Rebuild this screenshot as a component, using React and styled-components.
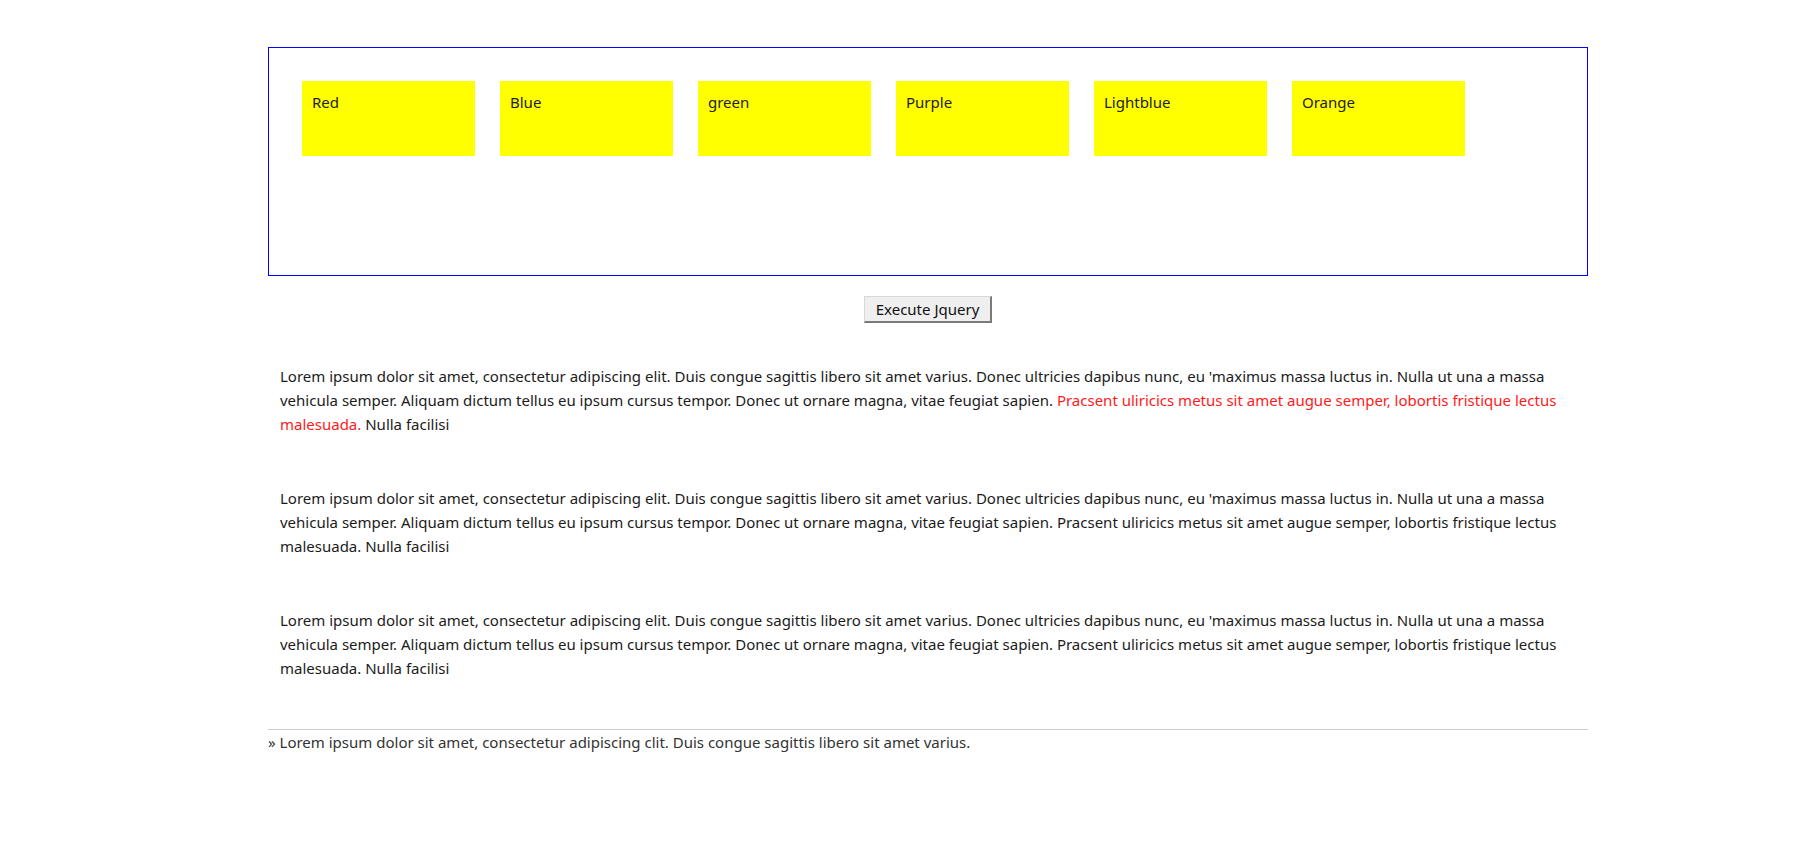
import styled, { createGlobalStyle } from "styled-components";

const GlobalStyle = createGlobalStyle`
  body {
    margin: 0;
    background: #fff;
    font-family: "Noto Sans", "Open Sans", sans-serif;
    color: #1b1b1b;
  }
`;

const Page = styled.div`
  width: 1320px;
  margin-left: 268px;
  padding-top: 47px;
`;

const Stage = styled.div`
  border: 1px solid #0000ff;
  padding: 33px 0 0 33px;
  box-sizing: border-box;
  height: 229px;
`;

const TileRow = styled.div`
  display: flex;
  gap: 25px;
`;

const Tile = styled.div`
  width: 173px;
  height: 75px;
  box-sizing: border-box;
  background: #ffff00;
  padding: 9px 10px;
  font-size: 15px;
  line-height: 24px;
  color: #222;
`;

const ButtonBar = styled.div`
  display: flex;
  justify-content: center;
  margin-top: 20px;
`;

const ExecButton = styled.button`
  width: 128px;
  height: 27px;
  background: #efefef;
  border: 1px solid #d8d8d8;
  border-right: 2px solid #7a7a7a;
  border-bottom: 2px solid #7a7a7a;
  font-family: "Noto Sans", "Open Sans", sans-serif;
  font-size: 15px;
  color: #111;
  padding: 0;
`;

const Articles = styled.div`
  display: flex;
  flex-direction: column;
  gap: 50px;
  margin-top: 41px;
  padding: 0 12px;
`;

const Para = styled.p`
  margin: 0;
  font-size: 15px;
  line-height: 24px;
  color: #1b1b1b;
`;

const Hot = styled.span`
  color: #ff1a1a;
`;

const Footer = styled.div`
  margin-top: 49px;
  border-top: 1px solid #cfcfcf;
  font-size: 15px;
  line-height: 24px;
  color: #333;
`;

const colours = ["Red", "Blue", "green", "Purple", "Lightblue", "Orange"];

const head =
  "Lorem ipsum dolor sit amet, consectetur adipiscing elit. Duis congue sagittis libero sit amet varius. Donec ultricies dapibus nunc, eu 'maximus massa luctus in. Nulla ut una a massa vehicula semper. Aliquam dictum tellus eu ipsum cursus tempor. Donec ut ornare magna, vitae feugiat sapien. ";
const red = "Pracsent uliricics metus sit amet augue semper, lobortis fristique lectus malesuada.";
const tail = " Nulla facilisi";

export default function App() {
  return (
    <>
      <GlobalStyle />
      <Page>
        <Stage>
          <TileRow>
            {colours.map((c) => (
              <Tile key={c}>{c}</Tile>
            ))}
          </TileRow>
        </Stage>
        <ButtonBar>
          <ExecButton>Execute Jquery</ExecButton>
        </ButtonBar>
        <Articles>
          <Para>
            {head}
            <Hot>{red}</Hot>
            {tail}
          </Para>
          <Para>
            {head}
            {red}
            {tail}
          </Para>
          <Para>
            {head}
            {red}
            {tail}
          </Para>
        </Articles>
        <Footer>
          » Lorem ipsum dolor sit amet, consectetur adipiscing clit. Duis congue sagittis libero sit amet varius.
        </Footer>
      </Page>
    </>
  );
}
